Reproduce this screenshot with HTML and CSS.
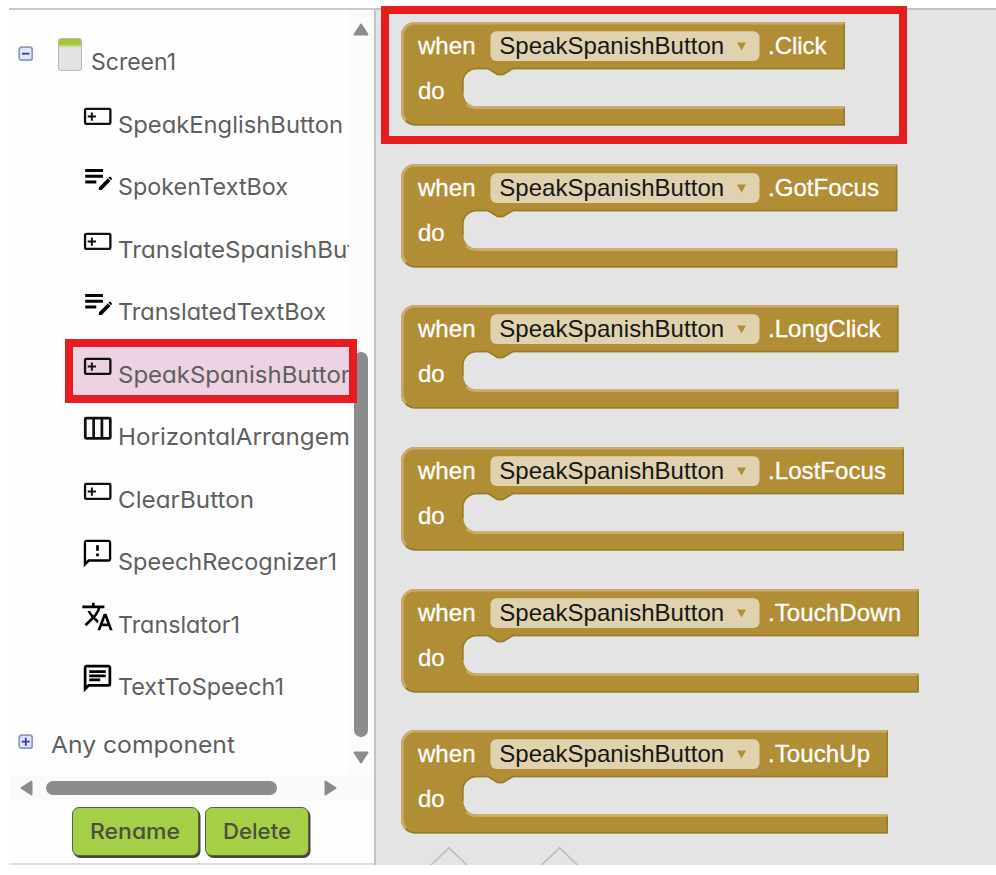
FILE: index.html
```
<!DOCTYPE html>
<html lang="en">
<head>
<meta charset="utf-8">
<title>Blocks editor</title>
<link rel="stylesheet" href="styles.css">
</head>
<body>
<svg class="defs" width="0" height="0" aria-hidden="true">
  <defs>
    <symbol id="i-button" viewBox="0 0 24 24"><rect x="2.95" y="6.4" width="18.4" height="11" rx=".9" fill="none" stroke="#111" stroke-width="1.7"/><path d="M7.9 9v6M4.9 12h6" stroke="#111" stroke-width="1.4"/></symbol>
    <symbol id="i-textbox" viewBox="0 0 24 24"><path d="M3 9.3h13.400v2.200H3zM3 7.300h13.400V5.100H3zM3 15.600h8.400v-2.200H3zM20.700 11.300l.3-.3c.39-.39 1.020-.39 1.410 0l.5.5c.39.39.39 1.020 0 1.410l-.4.4-2-2zm-.71.71-6.700 6.500V20.400h2.200l6.600-6.500-2-2z" transform="translate(.2 0) scale(.96 1)"/></symbol>
    <symbol id="i-columns" viewBox="0 0 24 24"><rect x="3.1" y="4.5" width="18.200" height="14.600" rx=".8" fill="none" stroke="#111" stroke-width="2"/><path d="M9.200 4v15M15.200 4v15" stroke="#111" stroke-width="2"/></symbol>
    <symbol id="i-speech" viewBox="0 0 24 24"><path d="M20 2H4c-1.100 0-1.990.9-1.990 2L2 22l4-4h14c1.100 0 2-.9 2-2V4c0-1.100-.9-2-2-2zm.3 14.200H5.200l-1.500 1.500V3.700h16.600v12.500zM11 12h2v2h-2zm0-6h2v4h-2z"/></symbol>
    <symbol id="i-translate" viewBox="0 0 24 24"><path d="M12.87 15.07l-2.54-2.51.03-.03c1.74-1.94 2.98-4.17 3.71-6.53H17V4h-7V2H8v2H1v1.99h11.17C11.5 7.92 10.44 9.75 9 11.35 8.07 10.32 7.3 9.19 6.69 8h-2c.73 1.63 1.73 3.17 2.98 4.56l-5.09 5.02L4 19l5-5 3.11 3.11.76-2.04zM18.5 10h-2L12 22h2l1.12-3h4.75L21 22h2l-4.500-12zm-2.62 7l1.620-4.330L19.120 17h-3.240z"/></symbol>
    <symbol id="i-chat" viewBox="0 0 24 24"><path d="M4 4h16v12H5.17L4 17.17V4m0-2c-1.1 0-1.99.9-1.99 2L2 22l4-4h14c1.1 0 2-.9 2-2V4c0-1.1-.9-2-2-2H4zm2 10h8v2H6v-2zm0-3h12v2H6V9zm0-3h12v2H6V6z"/></symbol>
  </defs>
</svg>
<div class="app">
  <aside class="components">
    <div class="viewport">
      <div class="tree">
        <div class="row root">
          <svg class="toggle" viewBox="0 0 16 16"><rect x="1.2" y="1.2" width="13" height="13" rx="2.5"/><path d="M4 7.7h7.5"/></svg>
          <span class="phone"></span>
          <svg class="label"><text y="41" textLength="85" lengthAdjust="spacingAndGlyphs">Screen1</text></svg>
        </div>
        <div class="row"><svg class="icon"><use href="#i-button"/></svg><svg class="label"><text y="41" textLength="225" lengthAdjust="spacingAndGlyphs">SpeakEnglishButton</text></svg></div>
        <div class="row"><svg class="icon"><use href="#i-textbox"/></svg><svg class="label"><text y="41" textLength="170" lengthAdjust="spacingAndGlyphs">SpokenTextBox</text></svg></div>
        <div class="row"><svg class="icon"><use href="#i-button"/></svg><svg class="label"><text y="41" textLength="273" lengthAdjust="spacingAndGlyphs">TranslateSpanishButton</text></svg></div>
        <div class="row"><svg class="icon"><use href="#i-textbox"/></svg><svg class="label"><text y="41" textLength="208" lengthAdjust="spacingAndGlyphs">TranslatedTextBox</text></svg></div>
        <div class="row selected"><svg class="icon"><use href="#i-button"/></svg><svg class="label"><text y="41" textLength="237" lengthAdjust="spacingAndGlyphs">SpeakSpanishButton</text></svg></div>
        <div class="row"><svg class="icon"><use href="#i-columns"/></svg><svg class="label"><text y="41" textLength="278" lengthAdjust="spacingAndGlyphs">HorizontalArrangement1</text></svg></div>
        <div class="row"><svg class="icon"><use href="#i-button"/></svg><svg class="label"><text y="41" textLength="136" lengthAdjust="spacingAndGlyphs">ClearButton</text></svg></div>
        <div class="row"><svg class="icon"><use href="#i-speech"/></svg><svg class="label"><text y="41" textLength="219" lengthAdjust="spacingAndGlyphs">SpeechRecognizer1</text></svg></div>
        <div class="row"><svg class="icon"><use href="#i-translate"/></svg><svg class="label"><text y="41" textLength="122" lengthAdjust="spacingAndGlyphs">Translator1</text></svg></div>
        <div class="row"><svg class="icon"><use href="#i-chat"/></svg><svg class="label"><text y="41" textLength="166" lengthAdjust="spacingAndGlyphs">TextToSpeech1</text></svg></div>
        <div class="row any">
          <svg class="toggle" viewBox="0 0 16 16"><rect x="1.2" y="1.2" width="13" height="13" rx="2.5"/><path d="M3.8 7.7h8M7.8 3.7v8"/></svg>
          <svg class="label"><text y="36" textLength="184" lengthAdjust="spacingAndGlyphs">Any component</text></svg>
        </div>
      </div>
      <div class="vbar">
        <svg class="arrow-v" viewBox="0 0 16 13"><path d="M8 1.5L14.5 11.5H1.5Z"/></svg>
        <span class="vthumb"></span>
        <svg class="arrow-v" viewBox="0 0 16 13"><path d="M1.5 1.5h13L8 11.5Z"/></svg>
      </div>
    </div>
    <div class="hbar">
      <svg class="arrow-h" viewBox="0 0 13 16"><path d="M11.5 1.5v13L1.5 8Z"/></svg>
      <span class="hthumb"></span>
      <svg class="arrow-h right" viewBox="0 0 13 16"><path d="M1.5 1.5L11.5 8L1.5 14.5Z"/></svg>
    </div>
    <div class="actions">
      <button class="rename"><svg viewBox="0 0 90 30"><text y="22" textLength="90" lengthAdjust="spacingAndGlyphs">Rename</text></svg></button>
      <button class="delete"><svg viewBox="0 0 68 30"><text y="22" textLength="68" lengthAdjust="spacingAndGlyphs">Delete</text></svg></button>
    </div>
  </aside>
  <main class="drawer">
    <div id="blocks" class="blocks"></div>
    <svg class="hints" viewBox="0 0 560 18"><path d="M30 18L48 .8L66 18M140.5 18L158.5 .8L176.5 18"/></svg>
  </main>
  <div class="mark mark-row"></div>
  <div class="mark mark-block"></div>
</div>
<script src="blocks.js"></script>
</body>
</html>
```
FILE: blocks.js
```
// Event name, block width, event label width
const events = [
  ["Click", 444, 58.5],
  ["GotFocus", 496.3, 111],
  ["LongClick", 497.5, 112.5],
  ["LostFocus", 503, 118],
  ["TouchDown", 517.7, 133],
  ["TouchUp", 487, 102]
];

document.getElementById("blocks").innerHTML = events.map(([name, w, len]) => `
<svg class="block" viewBox="0 0 560 104">
  <path class="body" d="M14 0H${w}V47.3H112L102 53.3H96.5L87 47.3H75.500A13 13 0 0 0 62.5 60.3V71.500A13 13 0 0 0 75.500 84.5H${w}V103.500H14A14 14 0 0 1 0 89.500V14A14 14 0 0 1 14 0Z"/>
  <path class="edge-dark" d="M${w - 0.8} 2V46.500H112L102 52.500H96.500L87 46.500H75.500A13.800 13.800 0 0 0 61.700 60.300V71M${w - 0.8} 86V102.700H14A13.200 13.200 0 0 1 5 99"/>
  <path class="edge-light" d="M5 98A12.700 12.700 0 0 1 1.300 89.500V14A12.700 12.700 0 0 1 14 1.300H${w - 1}M65.500 81.800A14 14 0 0 0 75.500 85.800H${w - 1}"/>
  <text x="17" y="32.300" textLength="57.500">when</text>
  <text x="17" y="76.700" textLength="26.500">do</text>
  <rect class="field" x="89.500" y="9.300" width="269" height="29.700" rx="6"/>
  <text class="dark" x="98.200" y="32.300" textLength="225">SpeakSpanishButton</text>
  <path class="caret" d="M336 20.500h9l-4.500 8z"/>
  <text x="367" y="32.300" textLength="${len}">.${name}</text>
</svg>`).join("");
```
FILE: styles.css
```
* { box-sizing: border-box; }
body { margin: 0; background: #fff; overflow: hidden; font-family: Inter, "Liberation Sans", sans-serif; }
svg { display: block; flex: none; }
.defs { position: absolute; }
.app {
  position: relative;
  display: flex;
  width: 996px;
  height: 865px;
  padding: 8px 0 0 9px;
}

/* component tree */
.components {
  width: 365px;
  flex: none;
  border-top: 2px solid #cbcbcb;
  border-bottom: 2px solid #dedede;
  background: #fefefe;
}
.viewport { display: flex; height: 765px; }
.tree { width: 340px; height: 765px; overflow: hidden; padding-top: 19px; }
.row { display: flex; height: 62.55px; padding-left: 72px; }
.row .icon { width: 33px; height: 33px; margin-top: 8px; }
.row .label { width: 300px; height: 60px; margin-left: 4px; overflow: visible; }
.label text {
  font-size: 23.5px;
  fill: #5e5e5e;
  font-feature-settings: "cv11" 1;
}
.root, .any { padding-left: 9px; }
.toggle { width: 16px; height: 16px; }
.toggle rect { fill: #e3e7f4; stroke: #8d96cf; stroke-width: 1.7; }
.toggle path { stroke: #3b35d0; stroke-width: 1.8; }
.root .toggle { margin-top: 17px; }
.phone {
  flex: none;
  width: 24px;
  height: 33px;
  margin: 9px 0 0 24px;
  border: 1.5px solid #b9b9b9;
  border-radius: 3px;
  background: linear-gradient(#a4c639 0 5px, #e3e3e3 9px);
}
.root .label { margin-left: 8.5px; }
.any .toggle { margin-top: 17px; }
.any .label { margin-left: 17px; }
.selected { background: #ecd2e2; background-clip: content-box; padding: 0 0 4px 60px; }
.selected .icon { margin-left: 12px; }

/* scroll bars */
.vbar {
  width: 24px;
  background: #fbfbfb;
  display: flex;
  flex-direction: column;
  align-items: center;
  padding-top: 13px;
}
.arrow-v { width: 16px; height: 13px; }
.arrow-v path, .arrow-h path { fill: #8c8c8c; stroke: #8c8c8c; stroke-width: 2; stroke-linejoin: round; }
.vthumb { width: 14.5px; height: 385px; margin: 316px 0 14px; border-radius: 8px; background: #8c8c8c; }
.hbar { height: 26px; background: #fafafa; display: flex; align-items: center; padding: 0 0 0 11px; }
.arrow-h { width: 13px; height: 16px; }
.hthumb { width: 230.5px; height: 14.5px; margin-left: 13px; border-radius: 8px; background: #8c8c8c; }
.arrow-h.right { margin-left: 47px; }

.actions { display: flex; gap: 6px; padding: 6px 0 0 63px; }
.actions button {
  height: 49px;
  padding: 0 0 0 17px;
  border: 1px solid #59633e;
  border-radius: 7px;
  background: #a5cf47;
  box-shadow: 1.5px 2px 0 #444;
}
.rename { width: 126.5px; }
.delete { width: 104.5px; }
.actions svg { height: 30px; overflow: visible; }
.rename svg { width: 90px; }
.delete svg { width: 68px; }
.actions text { font: 500 22px Inter, sans-serif; fill: #4b4f3c; font-feature-settings: "cv11" 1; }

/* blocks drawer */
.drawer {
  flex: 1;
  border-top: 2px solid #c3c3c3;
  border-left: 2px solid #c3c3c3;
  background: #e4e4e4;
  padding: 12.2px 0 0 24.7px;
  overflow: hidden;
}
.blocks { display: flex; flex-direction: column; gap: 37.65px; }
.block { width: 560px; height: 104px; }
.block text { font: 24px "Liberation Sans", Arial, sans-serif; fill: #fff; stroke: #fff; stroke-width: .3; }
.block text.dark { fill: #161616; stroke: none; }
.body { fill: #b18e35; }
.edge-dark { fill: none; stroke: #997a2d; stroke-width: 1.5; }
.edge-light { fill: none; stroke: #c6ad6b; stroke-width: 2.6; }
.field { fill: #e0d2ae; }
.caret { fill: #b18e35; }
.hints { width: 560px; height: 18px; margin-top: 13px; }
.hints path { fill: none; stroke: #bdbdbd; stroke-width: 1.6; }

/* callout frames */
.mark { position: absolute; border: 8px solid #e71c1e; }
.mark-row { left: 65px; top: 339px; width: 292px; height: 64px; }
.mark-block { left: 381px; top: 6px; width: 526px; height: 138px; }
```
